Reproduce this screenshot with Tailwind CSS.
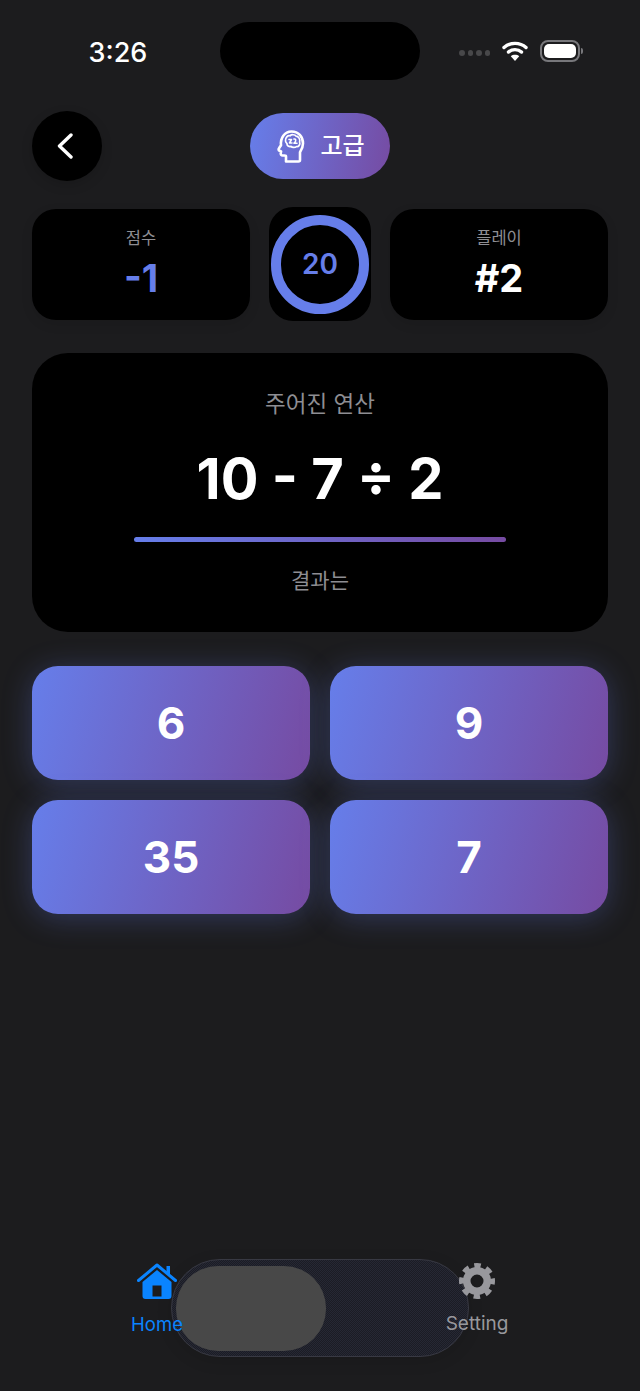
<!DOCTYPE html>
<html lang="ko">
<head>
<meta charset="utf-8">
<title>고급</title>
<script src="https://cdn.jsdelivr.net/npm/@tailwindcss/browser@4"></script>
</head>
<body class="bg-[#1c1c1e]">
<div class="relative flex h-[1391px] w-[640px] flex-col overflow-hidden bg-[#1c1c1e] px-8 font-['Inter','Noto_Sans_CJK_KR',sans-serif] text-white">

  <!-- status bar -->
  <div class="-mx-8 flex h-[111px] items-start">
    <div class="mt-[23px] flex h-[58px] w-[220px] items-center justify-center pl-[16px] text-[27px] font-medium leading-none">3:26</div>
    <div class="mt-[22px] h-[58px] w-[200px] rounded-[29px] bg-black"></div>
    <div class="mt-[40px] ml-[39px] flex items-center">
      <div class="mt-[3px] flex gap-[3px]">
        <span class="h-[6px] w-[5.5px] rounded-full bg-[#48484a]"></span>
        <span class="h-[6px] w-[5.5px] rounded-full bg-[#48484a]"></span>
        <span class="h-[6px] w-[5.5px] rounded-full bg-[#48484a]"></span>
        <span class="h-[6px] w-[5.5px] rounded-full bg-[#48484a]"></span>
      </div>
      <svg class="ml-[12px]" width="26" height="22" viewBox="0 0 26 22" fill="none">
        <path d="M2 7.500C8 2 18 2 24 7.500" stroke="#fff" stroke-width="3.4" stroke-linecap="round"/>
        <path d="M6.500 12C10 8.800 16 8.800 19.500 12" stroke="#fff" stroke-width="3.4" stroke-linecap="round"/>
        <path d="M13 21 8.800 16.200C11 14.400 15 14.400 17.200 16.200Z" fill="#fff"/>
      </svg>
      <div class="relative ml-[12px] flex h-[22px] w-[40px] items-center justify-center rounded-[8px] border-2 border-[#77777b]">
        <div class="h-[14px] w-[32px] rounded-[5px] bg-white"></div>
      </div>
      <div class="ml-[1px] h-[6px] w-[2px] rounded-r-full bg-[#77777b]"></div>
    </div>
  </div>

  <!-- header -->
  <div class="relative flex h-[70px] items-center justify-center">
    <button class="absolute left-0 top-0 flex h-[70px] w-[70px] items-center justify-center rounded-full bg-black shadow-[0_4px_12px_rgba(0,0,0,0.15)]">
      <svg width="16" height="26" viewBox="0 0 16 26" fill="none" class="-ml-[5px]">
        <path d="M14 2 2.500 13 14 24" stroke="#fff" stroke-width="3.4" stroke-linecap="round" stroke-linejoin="round"/>
      </svg>
    </button>
    <div class="flex h-[66px] w-[140px] items-center justify-center gap-[15px] rounded-[33px] bg-[linear-gradient(100deg,#667eea,#764ba2)] pl-[2px]">
      <svg width="28" height="33" viewBox="0 0 28 33" fill="none" stroke="#fff">
        <path d="M9 31.500V26.500C9 25.800 8.500 25.500 7.500 25.500H5.800C4.200 25.500 3.400 24.200 3.800 22.800L4.100 21.400L2.600 20.800C1.400 20.200 1.300 19.300 2 18.300L4 15.200C3.200 8 7.500 1.500 14.500 1.500C21.500 1.500 26 6.500 26 13.500C26 17.500 24.500 20 23 22.200V30C23 31 22.400 31.500 21.400 31.500Z" stroke-width="2.600" stroke-linejoin="round"/>
        <path d="M8.500 11C8 7.500 11 5 13 5.800C14.500 4.200 18 4.400 19 6.200C21.500 6.200 23.500 9.500 22.600 12C23.600 14.500 21.600 17 19.500 16.500C18 18 15 17.600 14 16.400C12 17 9.600 15.500 10 13.600C9.400 13 8.600 12 8.500 11Z" stroke-width="1.700" stroke-linejoin="round"/>
        <path d="M12 9.500H14.500L12.500 13H15M17 9C19 8.600 19.600 11 17 13.200H20" stroke-width="1.600" stroke-linecap="round" stroke-linejoin="round"/>
      </svg>
      <span class="text-[24px] font-medium leading-none">고급</span>
    </div>
  </div>

  <!-- score, timer and play count -->
  <div class="mt-[26px] flex items-center justify-between">
    <div class="flex h-[111px] w-[218px] flex-col items-center rounded-[24px] bg-black pt-[19px] shadow-[0_4px_12px_rgba(0,0,0,0.1)]">
      <span class="text-[16.500px] leading-[20px] text-[#8e8e93]">점수</span>
      <span class="mt-[8px] text-[38px] font-bold leading-[44px] text-[#667eea]">-1</span>
    </div>
    <div class="flex h-[114px] w-[102px] items-center justify-center rounded-[24px] bg-black">
      <div class="flex h-[99px] w-[98px] items-center justify-center rounded-full border-[10px] border-[#667eea] text-[28px] font-semibold leading-none text-[#667eea]">20</div>
    </div>
    <div class="flex h-[111px] w-[218px] flex-col items-center rounded-[24px] bg-black pt-[19px] shadow-[0_4px_12px_rgba(0,0,0,0.1)]">
      <span class="text-[16.500px] leading-[20px] text-[#8e8e93]">플레이</span>
      <span class="mt-[8px] text-[38px] font-bold leading-[44px]">#2</span>
    </div>
  </div>

  <!-- expression card -->
  <div class="mt-[32px] flex h-[279px] flex-col items-center rounded-[36px] bg-black pt-[36px]">
    <span class="text-[22.500px] leading-[30px] text-[#8e8e93]">주어진 연산</span>
    <span class="mt-[26px] text-[56px] font-bold leading-[68px]">10 - 7 ÷ 2</span>
    <div class="mt-[24px] h-[5px] w-[372px] rounded-full bg-[linear-gradient(90deg,#667eea,#764ba2)]"></div>
    <span class="mt-[24px] text-[21px] leading-[30px] text-[#8e8e93]">결과는</span>
  </div>

  <!-- answer choices -->
  <div class="mt-[34px] grid grid-cols-2 gap-x-[20px] gap-y-[20px]">
    <button class="flex h-[114px] items-center justify-center rounded-[26px] bg-[linear-gradient(105deg,#667eea,#764ba2)] text-[44px] font-bold shadow-[0_4px_30px_rgba(102,126,234,0.3)]">6</button>
    <button class="flex h-[114px] items-center justify-center rounded-[26px] bg-[linear-gradient(105deg,#667eea,#764ba2)] text-[44px] font-bold shadow-[0_4px_30px_rgba(102,126,234,0.3)]">9</button>
    <button class="flex h-[114px] items-center justify-center rounded-[26px] bg-[linear-gradient(105deg,#667eea,#764ba2)] text-[44px] font-bold shadow-[0_4px_30px_rgba(102,126,234,0.3)]">35</button>
    <button class="flex h-[114px] items-center justify-center rounded-[26px] bg-[linear-gradient(105deg,#667eea,#764ba2)] text-[44px] font-bold shadow-[0_4px_30px_rgba(102,126,234,0.3)]">7</button>
  </div>

  <!-- tab bar -->
  <div class="absolute bottom-[34px] left-[171px] flex h-[98px] w-[298px] items-center rounded-[49px] border-[1.500px] border-[#383943] bg-[repeating-conic-gradient(#1b1c24_0_25%,#262834_0_50%)] bg-[length:2px_2px] pl-[4px] shadow-[0_4px_16px_rgba(0,0,0,0.12)]">
    <div class="h-[85px] w-[150px] rounded-[42px] bg-[#484848]"></div>
  </div>
  <div class="absolute bottom-[56px] left-0 right-0 flex justify-center gap-[262px]">
    <div class="flex w-[52px] flex-col items-center">
      <svg width="40" height="36" viewBox="0 0 40 36">
        <path d="M1.500 17.500 20 2 38.500 17.500" fill="none" stroke="#0a84ff" stroke-width="3" stroke-linecap="round" stroke-linejoin="round"/>
        <path d="M29.500 3H33V12L29.500 9Z" fill="#0a84ff"/>
        <path d="M5.500 19 20 7 34.500 19V33C34.500 35 33.500 36 31.500 36H8.500C6.500 36 5.500 35 5.500 33ZM15.500 22.500V33.500H24.500V22.500Z" fill="#0a84ff" fill-rule="evenodd"/>
      </svg>
      <span class="mt-[14px] text-[18.500px] leading-[22px] text-[#0a84ff]">Home</span>
    </div>
    <div class="flex w-[64px] flex-col items-center">
      <svg width="36" height="36" viewBox="-18 -18 36 36" fill="none" stroke="#98989d">
        <circle r="10.250" stroke-width="7.500"/>
        <circle r="15.500" stroke-width="5" stroke-dasharray="6.500 5.680" stroke-dashoffset="3.250"/>
      </svg>
      <span class="mt-[14px] text-[19px] leading-[22px] text-[#98989d]">Setting</span>
    </div>
  </div>
</div>
</body>
</html>
